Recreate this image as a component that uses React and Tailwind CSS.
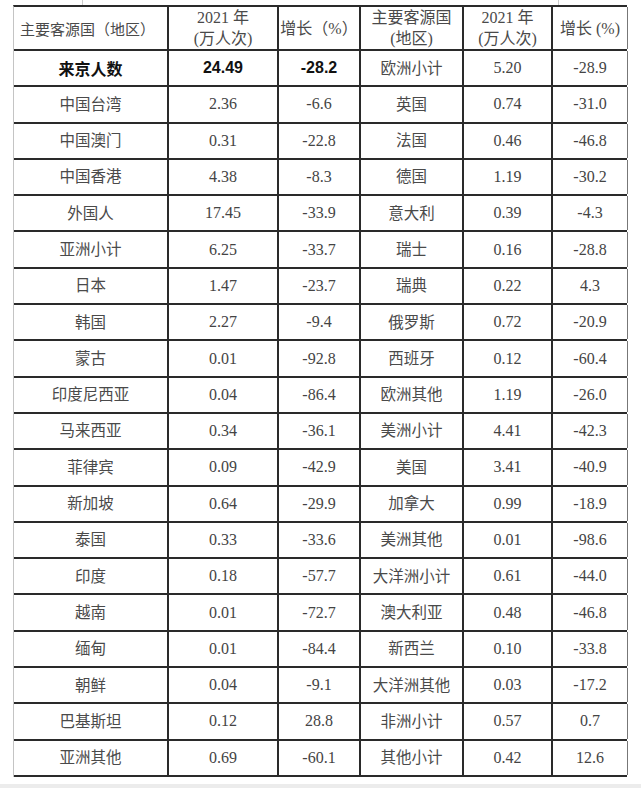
import React from 'react'

const left = [
  ['中国台湾', '2.36', '-6.6'],
  ['中国澳门', '0.31', '-22.8'],
  ['中国香港', '4.38', '-8.3'],
  ['外国人', '17.45', '-33.9'],
  ['亚洲小计', '6.25', '-33.7'],
  ['日本', '1.47', '-23.7'],
  ['韩国', '2.27', '-9.4'],
  ['蒙古', '0.01', '-92.8'],
  ['印度尼西亚', '0.04', '-86.4'],
  ['马来西亚', '0.34', '-36.1'],
  ['菲律宾', '0.09', '-42.9'],
  ['新加坡', '0.64', '-29.9'],
  ['泰国', '0.33', '-33.6'],
  ['印度', '0.18', '-57.7'],
  ['越南', '0.01', '-72.7'],
  ['缅甸', '0.01', '-84.4'],
  ['朝鲜', '0.04', '-9.1'],
  ['巴基斯坦', '0.12', '28.8'],
  ['亚洲其他', '0.69', '-60.1'],
]

const right = [
  ['欧洲小计', '5.20', '-28.9'],
  ['英国', '0.74', '-31.0'],
  ['法国', '0.46', '-46.8'],
  ['德国', '1.19', '-30.2'],
  ['意大利', '0.39', '-4.3'],
  ['瑞士', '0.16', '-28.8'],
  ['瑞典', '0.22', '4.3'],
  ['俄罗斯', '0.72', '-20.9'],
  ['西班牙', '0.12', '-60.4'],
  ['欧洲其他', '1.19', '-26.0'],
  ['美洲小计', '4.41', '-42.3'],
  ['美国', '3.41', '-40.9'],
  ['加拿大', '0.99', '-18.9'],
  ['美洲其他', '0.01', '-98.6'],
  ['大洋洲小计', '0.61', '-44.0'],
  ['澳大利亚', '0.48', '-46.8'],
  ['新西兰', '0.10', '-33.8'],
  ['大洋洲其他', '0.03', '-17.2'],
  ['非洲小计', '0.57', '0.7'],
  ['其他小计', '0.42', '12.6'],
]

const cols = 'grid grid-cols-[155px_110px_82px_103px_89px_75px]'
const cell = 'flex items-center justify-center border-r-2 border-[#2a2a2a]'
const lastCell = 'flex items-center justify-center border-r border-[#777]'

const App = () => {
  const rows = [['来京人数', '24.49', '-28.2'], ...left]

  return (
    <div className="relative w-[641px] h-[788px] bg-white overflow-hidden text-[#444] font-['Liberation_Serif','Noto_Sans_CJK_SC',serif]">
      {/* faint ruler marks above the sheet */}
      <div className="absolute left-[82px] top-0 h-[5px] border-l border-[#ccc]"></div>
      <div className="absolute left-[558px] top-0 h-[5px] border-l border-[#ccc]"></div>

      <div className="ml-[13px] mt-[5px] w-[614px] border-t-2 border-[#2a2a2a] border-l border-l-[#c4c4c4] border-l-dashed">
        <div className={`${cols} h-[44px] border-b-2 border-[#2a2a2a] text-[16px] leading-[21px] text-[#4a4a4a]`}>
          <div className="flex items-center border-r-2 border-[#2a2a2a] pl-[6px] text-[15px] font-['Noto_Sans_CJK_SC',sans-serif]">主要客源国（地区）</div>
          <div className={`${cell} flex-col`}><span>2021 年</span><span>(万人次)</span></div>
          <div className={cell}>增长（%）</div>
          <div className={`${cell} flex-col`}><span>主要客源国</span><span>(地区)</span></div>
          <div className={`${cell} flex-col`}><span>2021 年</span><span>(万人次)</span></div>
          <div className={lastCell}>增长 (%)</div>
        </div>

        {rows.map((r, i) => {
          const bold = i === 0
          const rr = right[i]
          return (
            <div key={i} className={`${cols} h-[36.3px] border-b-2 border-[#2a2a2a] text-[16px]`}>
              <div className={`${cell} ${bold ? "font-bold text-[#111] font-['Noto_Sans_CJK_SC',sans-serif]" : 'text-[15.5px] text-[#4a4a4a]'}`}>{r[0]}</div>
              <div className={`${cell} ${bold ? "font-bold text-[#111] font-['Liberation_Sans',sans-serif]" : ''}`}>{r[1]}</div>
              <div className={`${cell} ${bold ? "font-bold text-[#111] font-['Liberation_Sans',sans-serif]" : ''}`}>{r[2]}</div>
              <div className={`${cell} text-[15.5px] text-[#4a4a4a]`}>{rr[0]}</div>
              <div className={cell}>{rr[1]}</div>
              <div className={lastCell}>{rr[2]}</div>
            </div>
          )
        })}
      </div>

      <div className="absolute left-0 right-0 bottom-0 h-[4px] bg-[#ececec]"></div>
    </div>
  )
}

export default App
